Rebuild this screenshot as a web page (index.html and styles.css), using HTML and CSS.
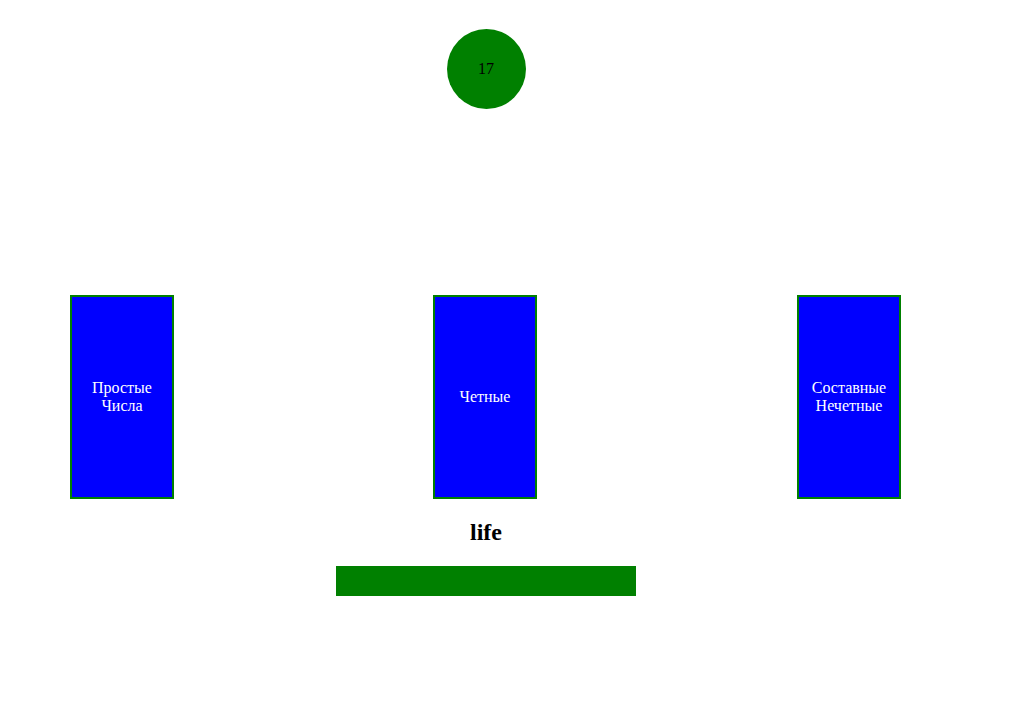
FILE: index.html
```html
<!DOCTYPE html>
<html>
<head>
<meta charset="utf-8">
<link rel="stylesheet" href="styles.css">
</head>
<body>
<div class="wrap">
  <div class="ball">17</div>
  <div class="boxes">
    <div class="box">Простые<br>Числа</div>
    <div class="box">Четные</div>
    <div class="box">Составные<br>Нечетные</div>
  </div>
  <h2 class="title">life</h2>
  <div class="bar"></div>
</div>
</body>
</html>
```
FILE: styles.css
```css
html, body {
  background: #fff;
}
body {
  margin: 8px;
  font-family: "Liberation Serif", "Times New Roman", serif;
  font-size: 16px;
}
.wrap {
  width: 956px;
  display: flex;
  flex-direction: column;
  align-items: center;
}
.ball {
  margin-top: 21px;
  width: 79px;
  height: 80px;
  border-radius: 50%;
  background: #008000;
  color: #000;
  display: flex;
  align-items: center;
  justify-content: center;
}
.boxes {
  align-self: stretch;
  margin-top: 186px;
  padding: 0 63px 0 62px;
  display: flex;
  gap: 259px;
}
.box {
  width: 100px;
  height: 200px;
  border: 2px solid #008000;
  background: #0000ff;
  color: #fff;
  display: flex;
  align-items: center;
  justify-content: center;
  text-align: center;
  line-height: 18px;
}
.box:last-child {
  margin-left: 1px;
}
.title {
  font-size: 24px;
  font-weight: bold;
  margin: 20px 0 20px;
}
.bar {
  width: 300px;
  height: 30px;
  background: #008000;
}
```
